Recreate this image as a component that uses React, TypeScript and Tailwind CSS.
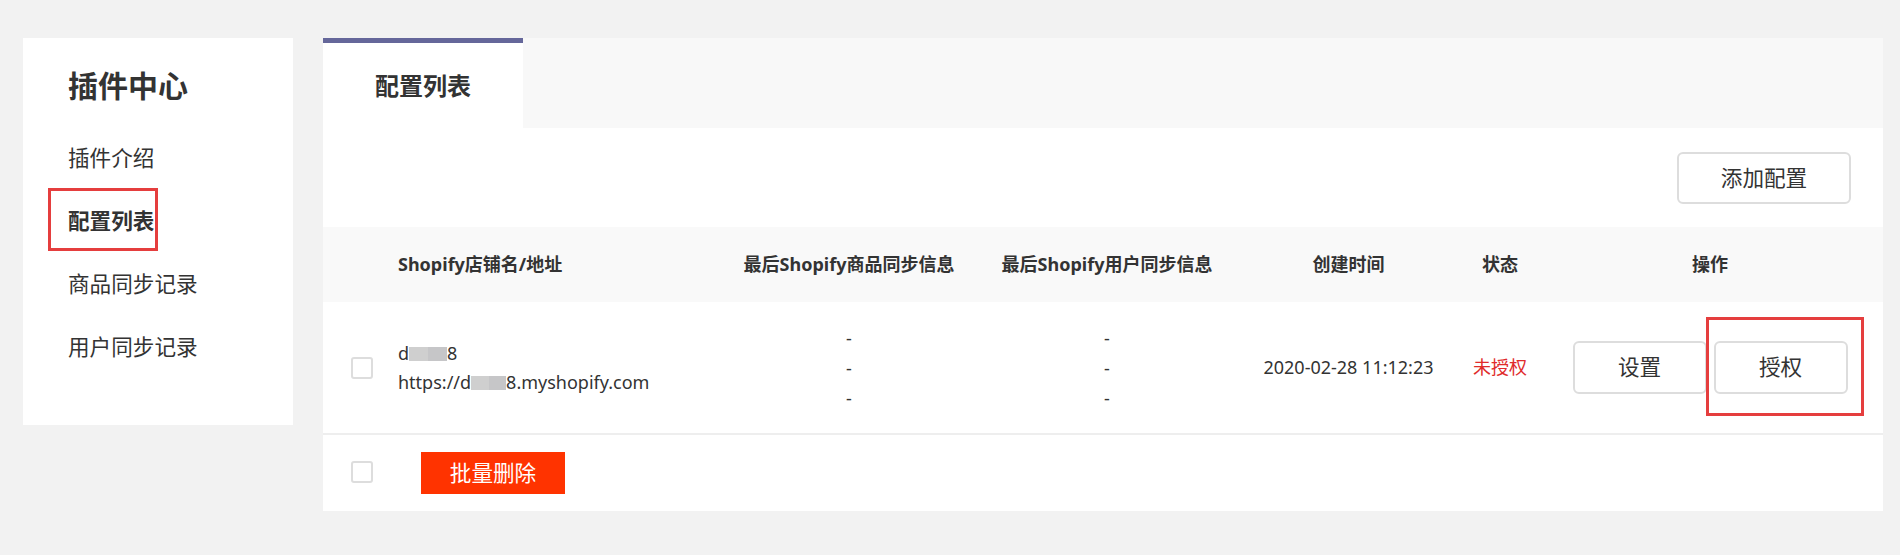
import React from "react"

const font = { fontFamily: '"Noto Sans", "Noto Sans CJK SC", sans-serif' }

const menu = ["插件介绍", "配置列表", "商品同步记录", "用户同步记录"]

const Checkbox = () => (
  <span className="block w-[22px] h-[22px] rounded-[3px] border-2 border-[#dddddd] bg-white" />
)

const Blur = ({ w }: { w: number }) => (
  <span className="inline-flex h-[14px] align-[-1px]" style={{ width: w }}>
    <span className="flex-1 bg-[#cfcfcf]" />
    <span className="flex-1 bg-[#c6c6c8]" />
  </span>
)

const cols = "grid grid-cols-[75px_325px_252px_264px_219px_84px_336px] items-center"

export default function App() {
  return (
    <div
      className="flex gap-[30px] w-full h-[555px] bg-[#f2f2f2] pl-[23px] pr-[17px] pt-[38px] text-[#333333]"
      style={font}
    >
      {/* sidebar */}
      <aside className="w-[270px] h-[387px] bg-white pl-[45px] pt-[17px] shrink-0">
        <div className="h-[60px] flex items-center text-[30px] font-bold">插件中心</div>
        <ul className="mt-[12px]">
          {menu.map((m) => (
            <li key={m} className="relative h-[63px] flex items-center text-[21.6px]">
              <span className={m === "配置列表" ? "font-bold" : ""}>{m}</span>
              {m === "配置列表" && (
                <span className="absolute left-[-20px] top-[-2px] w-[110px] h-[63px] border-[3px] border-[#e53e3e]" />
              )}
            </li>
          ))}
        </ul>
      </aside>

      {/* main panel */}
      <main className="flex-1 h-[473px] bg-white flex flex-col">
        <div className="h-[90px] bg-[#f8f8f8] flex">
          <div className="w-[200px] bg-white border-t-[5px] border-[#65679a] flex items-center justify-center text-[24px] font-bold">
            配置列表
          </div>
        </div>

        <div className="h-[99px] flex items-center justify-end pr-[32px]">
          <button className="w-[174px] h-[52px] mb-[-1px] rounded-[6px] border-2 border-[#dddddd] bg-white text-[21.6px]">
            添加配置
          </button>
        </div>

        <div className={`${cols} h-[75px] bg-[#f9f9f9] text-[18px] font-bold`}>
          <span />
          <span>Shopify店铺名/地址</span>
          <span className="text-center">最后Shopify商品同步信息</span>
          <span className="text-center">最后Shopify用户同步信息</span>
          <span className="text-center">创建时间</span>
          <span className="text-center">状态</span>
          <span className="text-center">操作</span>
        </div>

        <div className={`${cols} h-[133px] border-b-2 border-[#eeeeee] text-[18px]`}>
          <span className="pl-[28px]">
            <Checkbox />
          </span>
          <div className="leading-[29px]">
            <div>
              d<Blur w={38} />8
            </div>
            <div>
              https://d<Blur w={35} />8.myshopify.com
            </div>
          </div>
          <div className="text-center leading-[30px]">
            <div>-</div>
            <div>-</div>
            <div>-</div>
          </div>
          <div className="text-center leading-[30px]">
            <div>-</div>
            <div>-</div>
            <div>-</div>
          </div>
          <span className="text-center">2020-02-28 11:12:23</span>
          <span className="text-center text-[#e02b2b]">未授权</span>
          <div className="flex justify-center gap-[7px]">
            <button className="w-[134px] h-[53px] rounded-[6px] border-2 border-[#dddddd] bg-white text-[21.6px]">
              设置
            </button>
            <span className="relative">
              <button className="w-[134px] h-[53px] rounded-[6px] border-2 border-[#dddddd] bg-white text-[21.6px]">
                授权
              </button>
              <span className="absolute left-[-8px] top-[-24px] w-[158px] h-[99px] border-[3px] border-[#e53e3e]" />
            </span>
          </div>
        </div>

        <div className="h-[74px] flex items-center">
          <span className="pl-[28px]">
            <Checkbox />
          </span>
          <button className="ml-[48px] mt-[2px] w-[144px] h-[42px] bg-[#ff3300] text-white text-[21.6px]">
            批量删除
          </button>
        </div>
      </main>
    </div>
  )
}
